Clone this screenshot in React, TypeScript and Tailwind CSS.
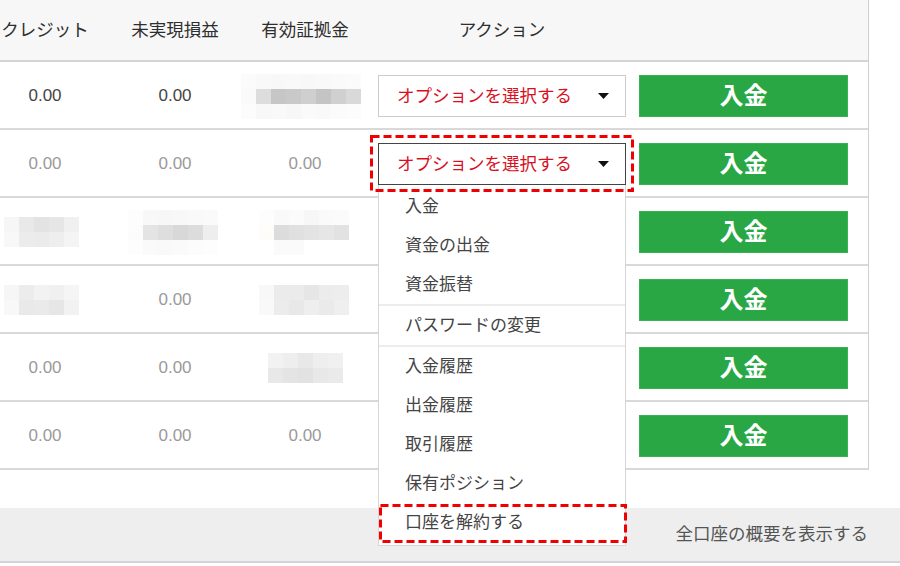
import React from "react";

type Cell = string | string[][] | null;

const font = {
  fontFamily: '"Liberation Sans", "Noto Sans CJK JP", sans-serif',
};

// pixelated (redacted) blocks, 15px cells
function Mosaic({ shades, offset = "" }: { shades: string[][]; offset?: string }) {
  return (
    <div className={`flex flex-col ${offset}`}>
      {shades.map((row, i) => (
        <div key={i} className="flex">
          {row.map((c, j) => (
            <div key={j} className="w-[15px] h-[15px]" style={{ backgroundColor: c }} />
          ))}
        </div>
      ))}
    </div>
  );
}

function Dashed({ w, h }: { w: number; h: number }) {
  return (
    <svg width={w} height={h} className="block">
      <rect
        x="1.5"
        y="1.5"
        width={w - 3}
        height={h - 3}
        fill="none"
        stroke="#f00000"
        strokeWidth="3"
        strokeDasharray="8 4"
      />
    </svg>
  );
}

function Caret() {
  return (
    <svg width="11" height="6" viewBox="0 0 11 6">
      <path d="M0 0 L11 0 L5.5 6 Z" fill="#111" />
    </svg>
  );
}

const rows: { cells: Cell[]; dim: boolean; open?: boolean; shift?: string[] }[] = [
  {
    dim: false,
    shift: ["", "", "ml-[-8px]"],
    cells: [
      "0.00",
      "0.00",
      [
        ["#fbfbfb", "#f9f9f9", "#f8f8f8", "#f9f9f9", "#f8f8f8", "#f9f9f9", "#fafafa", "#fbfbfb"],
        ["#fafafa", "#dddddd", "#c6c6c6", "#c9c9c9", "#cfcfcf", "#c4c4c4", "#d0d0d0", "#d9d9d9"],
        ["#fcfcfc", "#f8f8f8", "#f9f9f9", "#f7f7f7", "#fafafa", "#f9f9f9", "#fbfbfb", "#fcfcfc"],
      ],
    ],
  },
  { dim: true, open: true, cells: ["0.00", "0.00", "0.00"] },
  {
    dim: true,
    shift: ["ml-[-8px]", "ml-[-4px]", "ml-[-2px]"],
    cells: [
      [
        ["#f6f6f6", "#e9e9e9", "#e3e3e3", "#e6e6e6", "#f0f0f0"],
        ["#f8f8f8", "#ececec", "#ebebeb", "#eeeeee", "#f4f4f4"],
      ],
      [
        ["#fdfdfd", "#f8f8f8", "#f7f7f7", "#f8f8f8", "#f9f9f9", "#fafafa"],
        ["#fcfcfc", "#e4e4e4", "#dedede", "#d8d8d8", "#dcdcdc", "#eeeeee"],
        ["#fdfdfd", "#fafafa", "#f9f9f9", "#fafafa", "#fcfcfc", "#fdfdfd"],
      ],
      [
        ["#fdfdfd", "#f9f9f9", "#fbfbfb", "#f7f7f7", "#fafafa", "#fbfbfb"],
        ["#fdfcf8", "#dcdcdc", "#e0e0e0", "#e3e3e3", "#e6e6e6", "#e2e2e2"],
        ["#ffffff", "#fafafa", "#fafafa", "#ffffff", "#ffffff", "#ffffff"],
      ],
    ],
  },
  {
    dim: true,
    shift: ["ml-[-8px]", "", "ml-[-2px]"],
    cells: [
      [
        ["#f6f6f6", "#ececec", "#f2f2f2", "#f0f0f0", "#f5f5f5"],
        ["#f8f8f8", "#e9e9e9", "#eaeaea", "#e6e6e6", "#f2f2f2"],
      ],
      "0.00",
      [
        ["#f8f8f8", "#ebebeb", "#ebebeb", "#e6e6e6", "#ececec", "#ededed"],
        ["#f9f9f9", "#ececec", "#e8e8e8", "#eeeeee", "#eaeaea", "#efefef"],
      ],
    ],
  },
  {
    dim: true,
    cells: [
      "0.00",
      "0.00",
      [
        ["#f2f2f2", "#eeeeee", "#e8e8e8", "#eeeeee", "#f0f0f0"],
        ["#e8e8e8", "#e4e4e4", "#e2e2e2", "#e8e8e8", "#eaeaea"],
      ],
    ],
  },
  { dim: true, cells: ["0.00", "0.00", "0.00"] },
];

const menu: (string | "sep")[] = [
  "入金",
  "資金の出金",
  "資金振替",
  "sep",
  "パスワードの変更",
  "sep",
  "入金履歴",
  "出金履歴",
  "取引履歴",
  "保有ポジション",
  "口座を解約する",
];

export default function App() {
  return (
    <div className="relative w-[900px] h-[566px] overflow-hidden bg-white" style={font}>
      <div className="ml-[-20px] w-[889px] border-r border-[#cfcfcf]">
        {/* HEADER */}
        <div className="flex h-[62px] bg-[#f7f7f7] border-b-2 border-[#d4d4d4] text-[17.5px] text-[#2e2e2e]">
          {["クレジット", "未実現損益", "有効証拠金"].map((h) => (
            <div key={h} className="w-[130px] flex items-center justify-center">
              {h}
            </div>
          ))}
          <div className="w-[264px] flex items-center justify-center">アクション</div>
          <div className="flex-1" />
        </div>

        {/* ROWS */}
        {rows.map((r, i) => (
          <div key={i} className="flex h-[68px] pt-[2px] border-b-2 border-[#d9d9d9]">
            {r.cells.map((c, j) => (
              <div key={j} className="w-[130px] flex items-center justify-center">
                {typeof c === "string" ? (
                  <span className={`text-[17px] ${r.dim ? "text-[#9a9a9a]" : "text-[#444]"}`}>{c}</span>
                ) : c ? (
                  <Mosaic shades={c} offset={r.shift?.[j] ?? ""} />
                ) : null}
              </div>
            ))}
            <div className="w-[264px] flex items-center justify-center">
              {i < 2 && (
                <div className="relative">
                  <div
                    className={`w-[248px] h-[42px] bg-white flex items-center justify-between pl-[18px] pr-[16px] border ${
                      r.open ? "border-[#444]" : "border-[#cccccc]"
                    }`}
                  >
                    <span className="text-[17.5px] text-[#d8101e]">オプションを選択する</span>
                    <Caret />
                  </div>
                  {r.open && (
                    <>
                      <div className="absolute left-[-8px] top-[-8px] z-20">
                        <Dashed w={264} h={57} />
                      </div>
                      <div className="absolute left-0 top-full w-[248px] z-10 bg-white border border-t-0 border-[#d6d6d6] pt-[2px] pb-[3px]">
                        {menu.map((m, k) =>
                          m === "sep" ? (
                            <div key={k} className="h-[2px] bg-[#ececec]" />
                          ) : (
                            <div key={k} className="relative h-[39px] flex items-center pl-[26px] text-[17px] text-[#444]">
                              {m}
                              {k === menu.length - 1 && (
                                <div className="absolute left-0 top-[1px]">
                                  <Dashed w={248} h={39} />
                                </div>
                              )}
                            </div>
                          )
                        )}
                      </div>
                    </>
                  )}
                </div>
              )}
            </div>
            <div className="flex-1 flex items-center">
              <button className="ml-[5px] w-[209px] h-[42px] bg-[#29a745] border border-[#3bb155] text-white text-[24px] font-bold flex items-center justify-center">
                入金
              </button>
            </div>
          </div>
        ))}
      </div>

      <div className="h-[38px]" />

      {/* FOOTER */}
      <div className="h-[55px] bg-[#eeeeee] border-b-2 border-[#d4d4d4] flex items-center justify-end pr-[32px]">
        <span className="text-[17.5px] text-[#555]">全口座の概要を表示する</span>
      </div>
    </div>
  );
}
